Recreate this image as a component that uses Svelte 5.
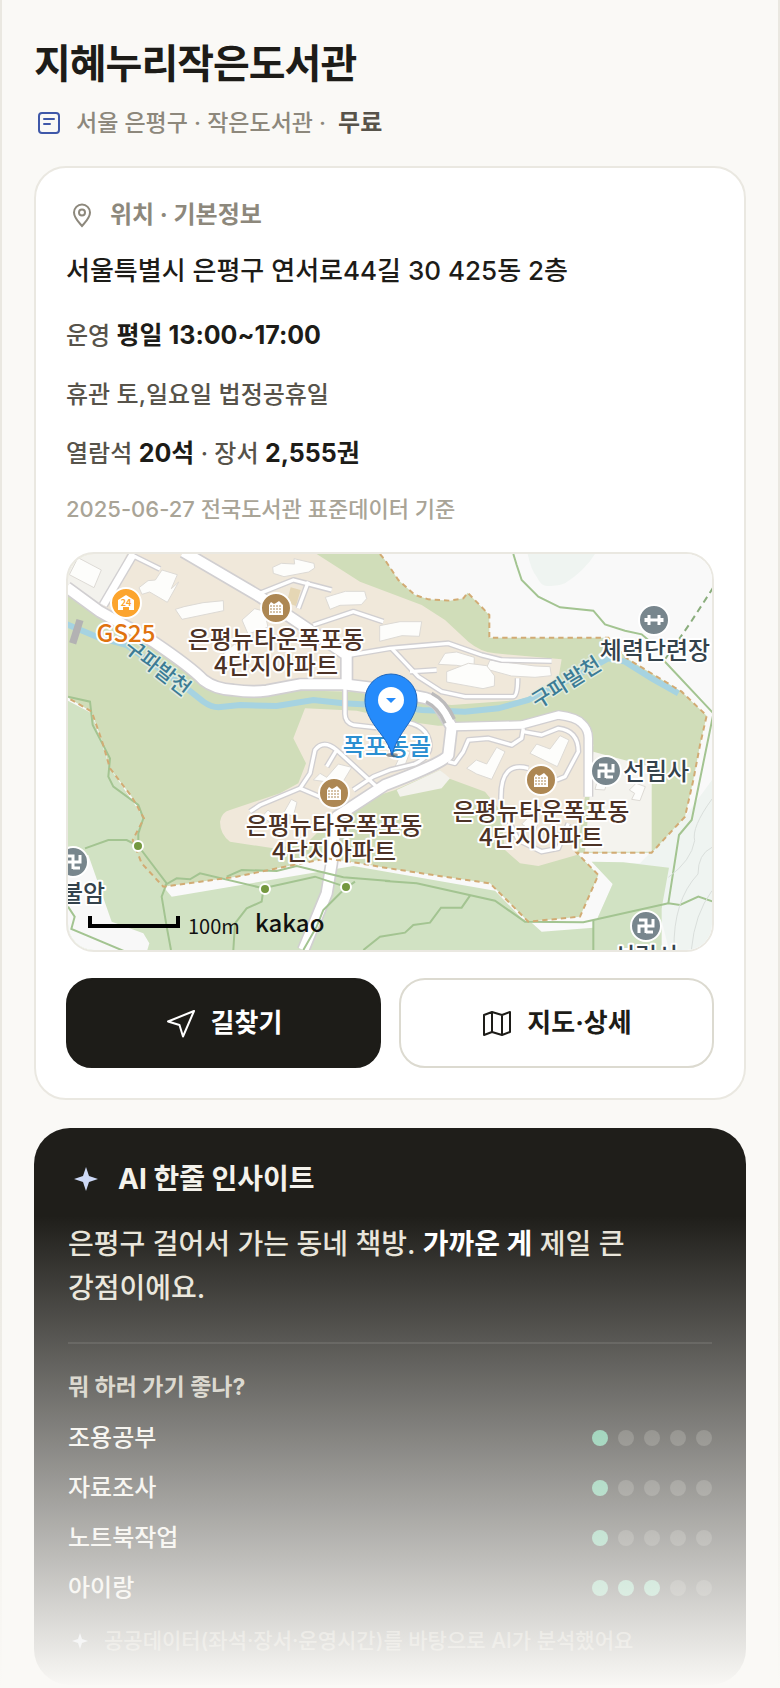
<script lang="ts">
	type Rating = { label: string; score: number };
	type Place = { kind: 'apt' | 'temple' | 'gym' | 'store'; x: number; y: number };

	const ratings: Rating[] = [
		{ label: '조용공부', score: 1 },
		{ label: '자료조사', score: 1 },
		{ label: '노트북작업', score: 1 },
		{ label: '아이랑', score: 3 }
	];

	const places: Place[] = [
		{ kind: 'store', x: 58, y: 49 },
		{ kind: 'apt', x: 208, y: 54 },
		{ kind: 'apt', x: 266, y: 239 },
		{ kind: 'apt', x: 473, y: 226 },
		{ kind: 'gym', x: 586, y: 66 },
		{ kind: 'temple', x: 538, y: 217 },
		{ kind: 'temple', x: 578, y: 372 },
		{ kind: 'temple', x: 5, y: 308 }
	];

	const stops = [
		[70, 292],
		[197, 335],
		[278, 333]
	];

	// ground layer uses 3 units per pixel
	const mainRoads = [
		'M-4 100L96 173L256 263Q370 340 406 378Q440 405 496 408Q550 416 596 410L696 391L826 391L966 408L1051 428Q1095 435 1111 453L1151 518L1141 603Q1130 625 951 693L806 788L791 928L776 1018L706 1188',
		'M346 -7L576 128L836 303L836 393'
	];
	const sideRoads = [
		'M1156 518L1361 513L1471 483Q1525 490 1541 508Q1561 525 1561 553V728',
		'M196 0L106 153'
	];
	const lanes = [
		'M191 3L276 45',
		'M576 118L676 78L791 108',
		'M721 83L691 163',
		'M736 213L856 173L946 203',
		'M846 303L966 283L1141 268L1241 303L1301 318L1451 321',
		'M971 283L1051 368L1121 413L1191 428H1335Q1349 428 1349 373',
		'M1026 353L1106 348',
		'M831 393V480Q831 505 856 513L926 521',
		'M926 698L806 588Q766 555 741 588L726 658L696 703L576 753L546 773',
		'M696 703L766 733',
		'M806 588L776 638',
		'M856 708L916 668L966 648L1040 630Q1086 610 1086 573Q1080 510 1001 503',
		'M1366 523L1361 553L1331 573L1261 553L1201 558L1186 593L1161 628L1141 623',
		'M1366 533L1421 543L1471 523Q1531 530 1531 593L1491 668L1466 678',
		'M1381 643Q1299 620 1299 728Q1300 790 1316 788L1351 858L1421 893L1471 883L1501 808'
	];
	const buildings = [
		'M30 11L100 48L78 101L4 62Z',
		'M240 80L262 78L282 48L328 62L310 104L332 84L298 145L245 114L222 121L213 101Z',
		'M322 166L348 158L405 146L466 140L467 170L342 196Z',
		'M614 40L640 28L680 30L678 14L738 28L740 42L722 54L648 68L616 58Z',
		'M772 130L832 112L890 112L896 134L880 152L816 154L786 166Z',
		'M522 198L560 164L590 172L600 220L540 240Z',
		'M454 310L500 270L520 290L486 330Z',
		'M935 215L996 203L1061 203L1054 247L1002 245L935 262Z',
		'M1111 331L1131 298L1166 294L1219 310L1218 343L1166 334Z',
		'M1254 345L1266 318L1311 324L1401 336L1446 338L1450 365L1401 370L1330 366Z',
		'M1136 353L1201 328L1256 335L1280 366L1279 396L1245 404L1136 384Z',
		'M1196 643L1225 618L1256 630L1286 580L1311 593L1271 676L1226 660Z',
		'M1386 598L1406 570L1446 585L1476 545L1503 558L1468 638Z',
		'M736 678L756 658L776 670L811 630L851 640L821 690Z',
		'M646 778L670 736L687 745L676 786Z',
		'M580 790L600 768L626 790L610 806Z',
		'M1586 688L1616 690L1610 708L1581 706Z',
		'M1684 708L1704 688L1732 698L1716 740L1691 736L1700 718Z',
		'M1361 810L1381 790L1411 806L1400 836Z',
		'M980 640L1006 585L1026 594L1010 636Z'
	];
	const trails = [
		'M1336 0L1346 33L1361 78L1411 128L1476 160L1576 170L1611 211L1671 230L1721 241L1741 258',
		'M1786 318L1936 478V480L1871 798L1833 843L1801 1048',
		'M951 981L1046 988L1281 1040L1371 1103L1546 1105L1801 1048L1836 1053L1891 1028L1936 1043',
		'M1576 1098V1188',
		'M1206 1025L1181 1061H1119L1086 1106L1036 1113L1011 1136L936 1148L886 1188',
		'M0 428L66 443L74 513L126 613L121 668L136 698L211 753L226 793L211 838V876L296 988L281 1028L296 1118L309 1188',
		'M51 883L121 858H176L211 876',
		'M291 993L326 973L366 976L396 958L586 1003L741 968L831 998',
		'M476 968L521 948L626 951L686 936L826 970L966 981',
		'M586 1008L581 1043L536 1063L501 1108L496 1188',
		'M861 983L826 1008L766 1068L746 1118L706 1188',
		'M0 1058L20 1088L10 1125L170 1192'
	];
	const boundary =
		'M936 0L951 18L991 78L1041 123L1081 136L1146 140L1186 133L1199 116L1264 183V251H1621L1676 313L1841 413L1916 485L1896 573L1876 678L1851 788L1751 896H1526L1591 963L1536 1088L1381 1103L1266 988L1161 973L951 941L876 928L776 913L676 933L506 968L286 998L221 928L194 858L228 793L191 728L126 643L101 558L71 473L6 435';
	const river =
		'M-10 208L86 248L176 273L356 403L406 443Q430 460 451 460L516 453L626 456L736 438L826 448L966 455L1061 468L1191 473L1291 463L1381 438L1511 373L1621 313L1671 323L1751 373L1831 418';
</script>

<main class="page">
	<header>
		<h1>지혜누리작은도서관</h1>
		<p class="meta">
			<svg width="30" height="30" viewBox="0 0 30 30" aria-hidden="true">
				<rect x="5" y="5" width="20" height="20" rx="3" />
				<path d="M10 11H20M10 16H16" />
			</svg>
			<span>서울 은평구 · 작은도서관 ·</span>
			<strong>무료</strong>
		</p>
	</header>

	<section class="card">
		<h2>
			<svg width="32" height="32" viewBox="0 0 32 32" aria-hidden="true">
				<path d="M16 27C13 23.5 8 19 8 13.5A8 8 0 0 1 24 13.5C24 19 19 23.5 16 27Z" />
				<circle cx="16" cy="13.5" r="3" />
			</svg>
			위치 · 기본정보
		</h2>
		<p class="address">서울특별시 은평구 연서로44길 30 425동 2층</p>
		<div class="facts">
			<p>운영 <strong>평일 13:00~17:00</strong></p>
			<p>휴관 토,일요일 법정공휴일</p>
			<p>열람석 <strong>20석</strong> · 장서 <strong>2,555권</strong></p>
		</div>
		<p class="source">2025-06-27 전국도서관 표준데이터 기준</p>

		<div class="map">
			<svg class="ground" viewBox="0 0 1932 1188" preserveAspectRatio="xMidYMid slice" aria-hidden="true">
				<rect width="1932" height="1188" fill="#f9f9f9" />
				<path d="M1379 0Q1390 50 1406 68Q1420 98 1441 96Q1470 98 1491 88Q1550 50 1581 0Z" fill="#eff4f1" />
				<path d="M1932 678L1851 788L1716 928L1571 923L1634 990L1585 1100L1781 1100L1803 1188H1932Z" fill="#eff4f1" />
				<path d="M0 440L71 478L126 643L228 793L286 998L311 1028L856 936L1281 1010L1371 1103L1391 1106L1421 1133L1576 1121V1098L1781 1050V1188H0Z" fill="#d1e2c3" />
				<path d="M1571 923L1666 925L1803 941L1781 1062L1585 1100L1634 990Z" fill="#d1e2c3" />
				<path d="M0 903L61 903L131 1103L226 1138L244 1168L238 1188H0Z" fill="#f8f8f8" />
				<path d="{boundary}L0 430V0Z" fill="#d0ddb9" />
				<path d="M0 0H746L876 83L1061 153L1131 198L1201 263Q1240 295 1281 298L1481 316L1466 403L1351 438L1151 453L1051 443L856 413L436 403L0 113Z" fill="#f0e8da" />
				<path d="M0 0H176L106 158L0 93Z" fill="#f3f2ed" />
				<path d="M711 463L866 470L1001 500L1110 515L1360 510L1471 475L1540 500L1576 573L1551 728L1526 903L1411 936L1356 928L1311 888L1296 768L1251 713L1141 673L1116 648L981 708L826 758L716 868L616 883L486 863Q456 840 456 803Q460 775 486 768L636 718L691 688L714 628L676 553Z" fill="#f0e8da" />
				<path d="M986 708L1116 648L1146 673L1121 703L996 728Z" fill="#f3f2ec" />
				<path d="M1576 593L1751 640V893H1551Z" fill="#f4f3ee" />
				<path d="M668 100L698 108L684 156L656 146Z" fill="#e5d6b4" />
				<path d={river} fill="none" stroke="#a6d3e1" stroke-width="18" />
				<g fill="#fdfdfb" stroke="#dddad5" stroke-width="3">
					{#each buildings as d}
						<path {d} />
					{/each}
				</g>
				<g class="casing">
					{#each lanes as d}<path {d} stroke-width="18" />{/each}
					{#each sideRoads as d}<path {d} stroke-width="30" />{/each}
					{#each mainRoads as d}<path {d} stroke-width="40" />{/each}
				</g>
				<g class="surface">
					{#each lanes as d}<path {d} stroke-width="10" />{/each}
					{#each sideRoads as d}<path {d} stroke-width="22" />{/each}
					{#each mainRoads as d}<path {d} stroke-width="30" />{/each}
				</g>
				<path d="M36 198L14 268" stroke="#b3b2b3" stroke-width="22" />
				<path d="M1074 443Q1110 460 1131 508M1091 418Q1135 440 1159 495" fill="none" stroke="#bcbbbc" stroke-width="10" />
				<g fill="none" stroke="#a3c491" stroke-width="6">
					{#each trails as d}
						<path {d} />
					{/each}
				</g>
				<path d="M1936 100L1866 208L1821 273L1786 323" fill="none" stroke="#8aad7c" stroke-width="6" stroke-dasharray="20 14" />
				<path d="M1932 735Q1870 820 1880 860Q1870 920 1801 970M1932 880Q1890 900 1890 960Q1815 1040 1818 1188M1932 1010Q1880 1080 1870 1188" fill="none" stroke="#d9dedb" stroke-width="3" />
				<path d={boundary} fill="none" stroke="#d2ab74" stroke-width="6" stroke-dasharray="16 12" />
			</svg>

			<svg class="labels" viewBox="0 0 644 396" preserveAspectRatio="xMidYMid slice" role="img" aria-label="지혜누리작은도서관 지도">
				{#each stops as [x, y]}
					<circle cx={x} cy={y} r="5" fill="#74983f" stroke="#fff" stroke-width="2" />
				{/each}

				{#each places as place}
					<g class={place.kind} transform="translate({place.x} {place.y})">
						<circle r="15" stroke="#fff" stroke-width="2" />
						{#if place.kind === 'apt'}
							<path d="M-7 7V-3L-5 -6L-2 -4L0 -5L3 -7L7 -3V7Z" fill="#fff" />
							<path class="windows" d="M-6 -2H6M-6 1H6M-6 4H6" />
						{:else if place.kind === 'temple'}
							<path class="line" d="M-7 -6H0V7M0 0H-7V7M7 6H0M0 0H7V-7" />
						{:else if place.kind === 'gym'}
							<path class="line" d="M-8 -2V2M-5 -5V5M5 -5V5M8 -2V2M-5 0H5" />
						{:else}
							<path d="M-8 7V-3L0 -8L8 -3V7H3V4H-3V7Z" fill="#fff" />
							<text class="hours" x="0" y="3">24</text>
						{/if}
					</g>
				{/each}

				<text class="river-name" x="0" y="8" transform="translate(90 113) rotate(38)">구파발천</text>
				<text class="store-name" x="58" y="88">GS25</text>
				<text class="river-name" x="0" y="8" transform="translate(498 128) rotate(-32)">구파발천</text>
				<text class="apt-name" x="208" y="94">은평뉴타운폭포동</text>
				<text class="apt-name" x="208" y="120">4단지아파트</text>
				<text class="apt-name" x="266" y="280">은평뉴타운폭포동</text>
				<text class="apt-name" x="266" y="306">4단지아파트</text>
				<text class="apt-name" x="473" y="266">은평뉴타운폭포동</text>
				<text class="apt-name" x="473" y="292">4단지아파트</text>
				<text class="spot-name" x="587" y="105">체력단련장</text>
				<text class="spot-name" x="588" y="226">선림사</text>
				<text class="spot-name" x="578" y="411">선림사</text>
				<text class="spot-name" x="15" y="348">불암</text>
				<text class="area-name" x="319" y="201">폭포동골</text>

				<ellipse cx="324" cy="201" rx="6" ry="2" fill="#555" opacity="0.6" />
				<path d="M324 201C320 186 310 178 303 166C299 159 297 153 297 146A26 26 0 0 1 349 146C349 153 347 159 342 167C335 178 328 186 324 201Z" fill="#258bfb" stroke="#1d66bd" />
				<circle cx="323" cy="146" r="13" fill="#fff" />
				<path d="M318 144H328L323 149Z" fill="#258bfb" />

				<path d="M22 362V372H110V362" fill="none" stroke="#000" stroke-width="4" />
				<text class="scale" x="120" y="380">100m</text>
				<text class="brand" x="187" y="378">kakao</text>
			</svg>
		</div>

		<div class="actions">
			<button class="primary">
				<svg width="32" height="32" viewBox="0 0 32 32" aria-hidden="true">
					<path d="M29 4L3 14.5L14.5 18L18 29.5Z" />
				</svg>
				길찾기
			</button>
			<button class="secondary">
				<svg width="32" height="32" viewBox="0 0 32 32" aria-hidden="true">
					<path d="M3 8L11 5L21 8L29 5V25L21 28L11 25L3 28ZM11 5V25M21 8V28" />
				</svg>
				지도·상세
			</button>
		</div>
	</section>

	<section class="insight">
		<h2>
			<svg width="36" height="36" viewBox="0 0 36 36" aria-hidden="true">
				<path d="M18 6L21 15L30 18L21 21L18 30L15 21L6 18L15 15Z" />
			</svg>
			AI 한줄 인사이트
		</h2>
		<p class="summary">은평구 걸어서 가는 동네 책방. <strong>가까운 게</strong> 제일 큰 강점이에요.</p>
		<h3>뭐 하러 가기 좋나?</h3>
		<ul>
			{#each ratings as rating}
				<li>
					<span>{rating.label}</span>
					<span class="dots" role="img" aria-label="5점 만점에 {rating.score}점">
						{#each [1, 2, 3, 4, 5] as step}
							<i class:on={step <= rating.score}></i>
						{/each}
					</span>
				</li>
			{/each}
		</ul>
		<p class="note">
			<svg width="24" height="24" viewBox="0 0 24 24" aria-hidden="true">
				<path d="M12 4L14 10L20 12L14 14L12 20L10 14L4 12L10 10Z" />
			</svg>
			공공데이터(좌석·장서·운영시간)를 바탕으로 AI가 분석했어요
		</p>
	</section>
	<div class="fade"></div>
</main>

<style>
	:global(body) {
		background: #faf9f6;
	}

	.page {
		position: relative;
		box-sizing: border-box;
		padding: 36px 32px 3px;
		border: solid #eae8e1;
		border-width: 0 2px;
		background: #faf9f6;
		color: #1d1c18;
		font-family: Inter, 'Noto Sans CJK KR', sans-serif;
		font-size: 24px;
		font-weight: 500;
		word-break: keep-all;
	}

	h1,
	h2,
	h3,
	p,
	ul {
		margin: 0;
		padding: 0;
	}

	svg {
		flex-shrink: 0;
	}

	h1 {
		font-size: 40px;
		font-weight: 700;
		line-height: 56px;
		letter-spacing: -1px;
	}

	.meta {
		display: flex;
		align-items: center;
		gap: 12px;
		margin-top: 14px;
		color: #8d887c;
		font-size: 23px;
		line-height: 34px;
	}

	.meta svg {
		fill: none;
		stroke: #3f58a9;
		stroke-width: 2;
		stroke-linecap: round;
	}

	.meta strong {
		color: #57534a;
		font-size: 24px;
		font-weight: 700;
	}

	.card {
		margin-top: 26px;
		padding: 30px;
		border: 2px solid #eae8e1;
		border-radius: 32px;
		background: #fff;
	}

	.card h2 {
		display: flex;
		align-items: center;
		gap: 12px;
		color: #8d887c;
		font-size: 24px;
		font-weight: 700;
		line-height: 34px;
	}

	.card h2 svg {
		fill: none;
		stroke: #8d887c;
		stroke-width: 2;
	}

	.address {
		margin-top: 18px;
		font-size: 26px;
		line-height: 42px;
	}

	.facts {
		display: flex;
		flex-direction: column;
		gap: 19px;
		margin-top: 24px;
		color: #57534a;
		line-height: 40px;
	}

	/* keeps the larger bold text from growing the row */
	.facts strong {
		color: #1d1c18;
		font-size: 25px;
		font-weight: 700;
		line-height: 1;
	}

	.source {
		margin-top: 18px;
		color: #a9a497;
		font-size: 22px;
		line-height: 34px;
	}

	.map {
		position: relative;
		height: 396px;
		margin-top: 26px;
		overflow: hidden;
		border: 2px solid #eae8e1;
		border-radius: 28px;
	}

	.map svg {
		position: absolute;
		inset: 0;
		width: 100%;
		height: 100%;
	}

	.casing path,
	.surface path {
		fill: none;
		stroke: #d1cfd1;
		stroke-linejoin: round;
	}

	.surface path {
		stroke: #fff;
	}

	.labels text {
		paint-order: stroke;
		stroke: #fff;
		stroke-width: 4px;
		stroke-linejoin: round;
		font-family: 'Noto Sans CJK KR', sans-serif;
		font-size: 24px;
		font-weight: 500;
		text-anchor: middle;
	}

	.labels .store-name {
		fill: #e0730f;
	}

	.labels .apt-name {
		fill: #4c3226;
	}

	.labels .spot-name {
		fill: #34424b;
	}

	.labels .area-name {
		fill: #2b8fd1;
	}

	.labels .river-name {
		fill: #3c7c96;
		stroke: #e0ecdf;
		stroke-width: 3px;
		font-size: 21px;
	}

	.labels .hours {
		fill: #fca42d;
		stroke: none;
		font-size: 9px;
		font-weight: 700;
	}

	.labels .scale,
	.labels .brand {
		fill: #111;
		stroke: none;
		text-anchor: start;
	}

	.labels .scale {
		font-size: 20px;
		font-weight: 400;
	}

	.store {
		fill: #fca42d;
	}

	.apt {
		fill: #ad8753;
	}

	.temple,
	.gym {
		fill: #78868d;
	}

	.line {
		fill: none;
		stroke: #fff;
		stroke-width: 3;
	}

	.windows {
		fill: none;
		stroke: #ad8753;
		stroke-width: 1;
		stroke-dasharray: 2 1;
	}

	.actions {
		display: grid;
		grid-template-columns: 1fr 1fr;
		gap: 18px;
		margin-top: 26px;
	}

	button {
		display: flex;
		align-items: center;
		justify-content: center;
		gap: 14px;
		height: 90px;
		border: 2px solid #1d1c18;
		border-radius: 26px;
		font-family: inherit;
		font-size: 26px;
		font-weight: 700;
		line-height: 36px;
		cursor: pointer;
	}

	button svg {
		fill: none;
		stroke: currentColor;
		stroke-width: 2;
		stroke-linejoin: round;
	}

	.primary {
		background: #1d1c18;
		color: #fff;
	}

	.secondary {
		border-color: #dcdad0;
		background: #fff;
		color: #1d1c18;
	}

	.insight {
		margin-top: 28px;
		padding: 31px 34px 28px;
		border-radius: 36px;
		background: #1f1e1a;
		color: #f4f2ec;
	}

	.insight h2 {
		display: flex;
		align-items: center;
		gap: 14px;
		font-size: 28px;
		font-weight: 700;
		line-height: 40px;
	}

	.insight h2 svg {
		fill: #cdd9f6;
	}

	.summary {
		margin-top: 23px;
		padding-bottom: 32px;
		border-bottom: 2px solid #34332f;
		color: #e8e4d9;
		font-size: 28px;
		line-height: 44px;
	}

	.summary strong {
		color: #fff;
		font-weight: 700;
	}

	h3 {
		margin-top: 26px;
		color: #cbc7bb;
		font-size: 23px;
		font-weight: 700;
		line-height: 34px;
	}

	ul {
		display: flex;
		flex-direction: column;
		gap: 14px;
		margin-top: 16px;
		list-style: none;
	}

	li {
		display: flex;
		align-items: center;
		justify-content: space-between;
		line-height: 36px;
	}

	.dots {
		display: flex;
		gap: 10px;
	}

	.dots i {
		width: 16px;
		height: 16px;
		border-radius: 50%;
		background: #46453f;
	}

	.dots .on {
		background: #5cb990;
	}

	.note {
		display: flex;
		align-items: center;
		gap: 12px;
		margin-top: 19px;
		color: #8d887c;
		font-size: 21px;
		line-height: 32px;
	}

	.note svg {
		fill: #cdd9f6;
	}

	.fade {
		position: absolute;
		right: -2px;
		bottom: 0;
		left: -2px;
		height: 472px;
		background: linear-gradient(rgba(250, 249, 246, 0), #faf9f6);
	}
</style>
